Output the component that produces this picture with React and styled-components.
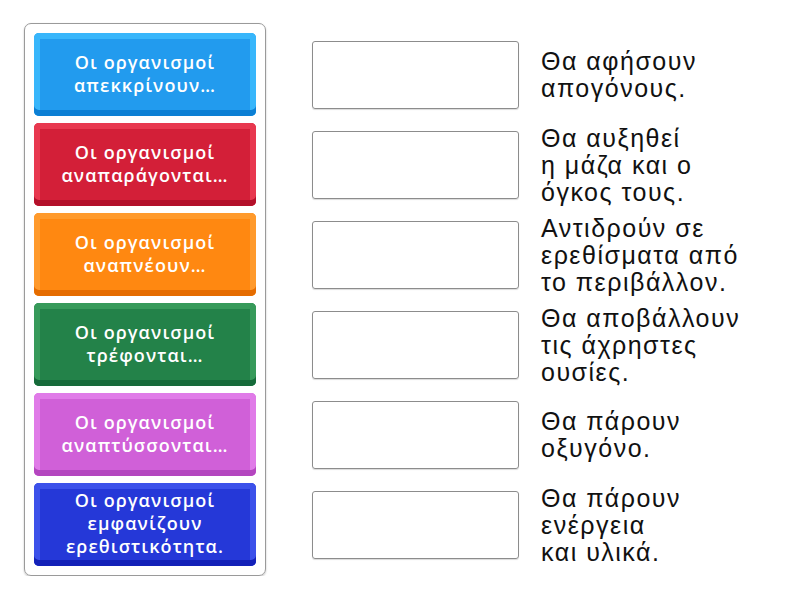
import styled, { createGlobalStyle } from "styled-components";

const GlobalStyle = createGlobalStyle`
  body {
    margin: 0;
    background: #ffffff;
    font-family: "Open Sans", "Noto Sans", sans-serif;
  }
`;

const Page = styled.div`
  display: flex;
  align-items: flex-start;
  padding: 23px 0 0 24px;
  gap: 46px;
`;

const Panel = styled.div`
  display: flex;
  flex-direction: column;
  gap: 7px;
  width: 222px;
  padding: 9px;
  border: 1px solid #9a9a9a;
  border-radius: 7px;
  box-shadow: 0 1px 2px rgba(0, 0, 0, 0.25);
`;

const Tile = styled.div`
  height: 83px;
  box-sizing: border-box;
  display: flex;
  align-items: center;
  justify-content: center;
  padding: 2px 6px 4px;
  border-radius: 5px;
  background: ${(p) => p.$face};
  box-shadow: inset 0 -6px 0 ${(p) => p.$dark}, inset 6px 0 0 ${(p) => p.$light},
    inset -6px 0 0 ${(p) => p.$light}, inset 0 6px 0 ${(p) => p.$light};
  color: #ffffff;
  font-size: 18px;
  font-weight: 600;
  line-height: 23px;
  letter-spacing: 1.1px;
  text-align: center;
`;

const Answers = styled.div`
  display: flex;
  flex-direction: column;
  padding-top: 7px;
`;

const Row = styled.div`
  display: flex;
  align-items: center;
  height: 90px;
  gap: 22px;
`;

const DropBox = styled.div`
  width: 207px;
  height: 68px;
  box-sizing: border-box;
  border: 1px solid #8c8c8c;
  border-radius: 3px;
  box-shadow: 0 1px 1px rgba(0, 0, 0, 0.15);
  flex-shrink: 0;
`;

const Answer = styled.div`
  font-family: "Liberation Sans", Arial, sans-serif;
  font-size: 25px;
  line-height: 27px;
  color: #111111;
  letter-spacing: 1.5px;
`;

const tiles = [
  { text: ["Οι οργανισμοί", "απεκκρίνουν…"], light: "#38b6fb", face: "#229bee", dark: "#0c7fd4" },
  { text: ["Οι οργανισμοί", "αναπαράγονται…"], light: "#e8384f", face: "#d31f38", dark: "#b3102a" },
  { text: ["Οι οργανισμοί", "αναπνέουν…"], light: "#ff9a2c", face: "#ff8811", dark: "#e56c00" },
  { text: ["Οι οργανισμοί", "τρέφονται…"], light: "#379a5a", face: "#238249", dark: "#166a3a" },
  { text: ["Οι οργανισμοί", "αναπτύσσονται…"], light: "#e07be8", face: "#d060d8", dark: "#b446bf" },
  { text: ["Οι οργανισμοί", "εμφανίζουν", "ερεθιστικότητα."], light: "#3c51ea", face: "#2538d8", dark: "#1421b8" },
];

const answers = [
  ["Θα αφήσουν", "απογόνους."],
  ["Θα αυξηθεί", "η μάζα και ο", "όγκος τους."],
  ["Αντιδρούν σε", "ερεθίσματα από", "το περιβάλλον."],
  ["Θα αποβάλλουν", "τις άχρηστες", "ουσίες."],
  ["Θα πάρουν", "οξυγόνο."],
  ["Θα πάρουν", "ενέργεια", "και υλικά."],
];

const Lines = ({ lines }) =>
  lines.map((l, i) => (
    <span key={i}>
      {l}
      {i < lines.length - 1 && <br />}
    </span>
  ));

const App = () => {
  return (
    <>
      <GlobalStyle />
      <Page>
        <Panel>
          {tiles.map((t, i) => (
            <Tile key={i} $light={t.light} $face={t.face} $dark={t.dark}>
              <div>
                <Lines lines={t.text} />
              </div>
            </Tile>
          ))}
        </Panel>
        <Answers>
          {answers.map((a, i) => (
            <Row key={i}>
              <DropBox />
              <Answer>
                <Lines lines={a} />
              </Answer>
            </Row>
          ))}
        </Answers>
      </Page>
    </>
  );
};

export default App;
